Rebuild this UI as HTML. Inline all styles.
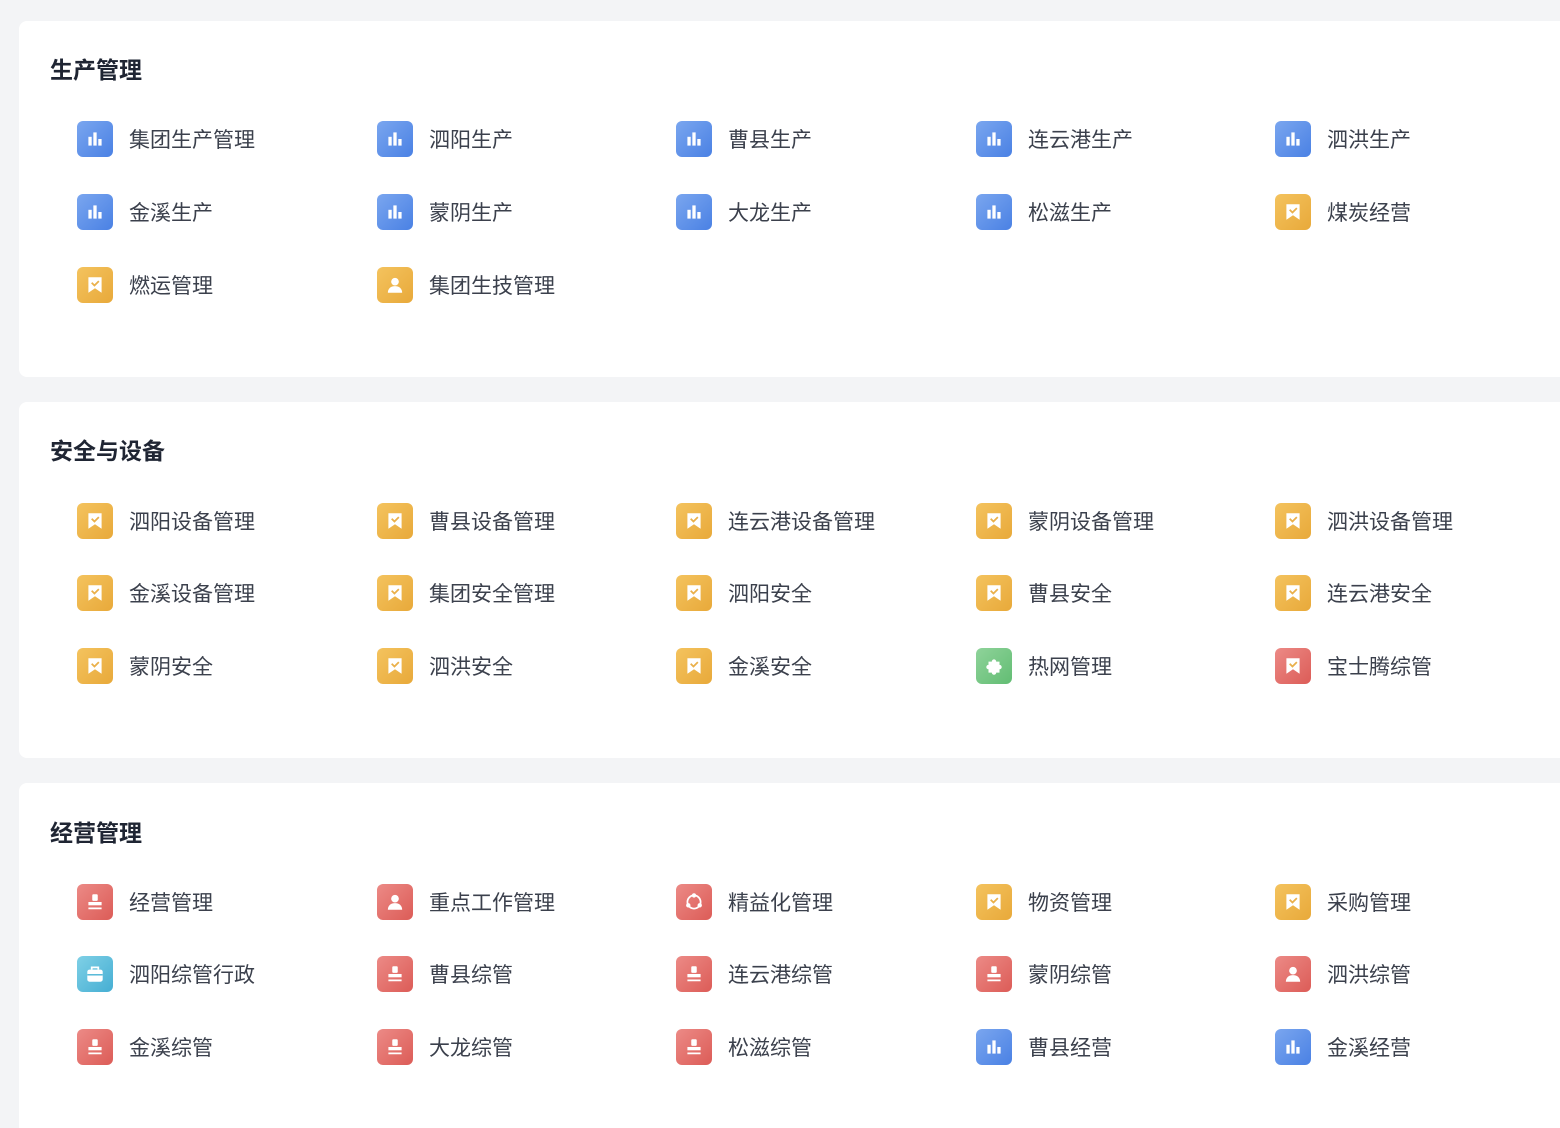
<!DOCTYPE html>
<html style="overflow:hidden;height:1128px"><head><meta charset="utf-8">
<style>
*{margin:0;padding:0;box-sizing:border-box}
body{width:1560px;height:1128px;background:#f3f4f6;position:relative;overflow:hidden;font-family:"Liberation Sans","Noto Sans CJK SC",sans-serif}
.card{position:absolute;left:19px;width:1560px;height:356px;background:#fff;border-radius:8px}
.t{position:absolute;left:31px;font-size:23px;font-weight:bold;color:#1f2533;line-height:30px}
.it{position:absolute;height:36px;display:flex;align-items:center}
.ic{width:36px;height:36px;border-radius:6px;display:flex;align-items:center;justify-content:center}
.ic svg{width:22px;height:22px;display:block}
.lb{margin-left:16px;font-size:21px;color:#3b404c;white-space:nowrap}
.b{background:linear-gradient(135deg,#7aa6ef,#4a81e4)}
.y{background:linear-gradient(135deg,#f4c35e,#e8a93a)}
.r{background:linear-gradient(135deg,#ec8a86,#dc5c57)}
.g{background:linear-gradient(135deg,#8fd39a,#62bd73)}
.c{background:linear-gradient(135deg,#7fd0e6,#45aed3)}
</style></head><body>
<svg width="0" height="0" style="position:absolute">
<defs>
<symbol id="bar" viewBox="0 0 20 20"><rect x="4" y="8" width="3" height="8" fill="#fff"/><rect x="8.5" y="4" width="3" height="12" fill="#fff"/><rect x="13" y="10" width="3" height="6" fill="#fff"/></symbol>
<symbol id="bm" viewBox="0 0 20 20"><path d="M4 3h12v14l-6-4-6 4z" fill="#fff"/><path d="M7 8l2.5 2.5L13.5 6.5" stroke="#eab04a" stroke-width="1.6" fill="none"/></symbol>
<symbol id="ps" viewBox="0 0 20 20"><circle cx="10" cy="7" r="3.5" fill="#fff"/><path d="M3.5 17c0-4 3-6 6.5-6s6.5 2 6.5 6z" fill="#fff"/></symbol>
<symbol id="st" viewBox="0 0 20 20"><rect x="7.5" y="3" width="5" height="6" rx="1" fill="#fff"/><rect x="4" y="10" width="12" height="3" fill="#fff"/><rect x="4" y="15" width="12" height="1.6" fill="#fff"/></symbol>
<symbol id="bag" viewBox="0 0 20 20"><path d="M7 6V4h6v2" stroke="#fff" stroke-width="1.6" fill="none"/><rect x="3" y="6" width="14" height="11" rx="2" fill="#fff"/><rect x="3" y="10" width="14" height="1.4" fill="#5bbbd9"/></symbol>
<symbol id="pz" viewBox="0 0 20 20"><path d="M5 6h3a2 2 0 114 0h3v3a2 2 0 110 4v3h-3a2 2 0 11-4 0H5v-3a2 2 0 110-4z" fill="#fff"/></symbol>
<symbol id="ci" viewBox="0 0 20 20"><circle cx="10" cy="10" r="6" stroke="#fff" stroke-width="1.6" fill="none"/><circle cx="10" cy="4" r="2" fill="#fff"/><circle cx="4.8" cy="13" r="2" fill="#fff"/><circle cx="15.2" cy="13" r="2" fill="#fff"/></symbol>
</defs></svg>

<div class="card" style="top:21px">
<div class="t" style="top:34px">生产管理</div>
</div>
<div class="card" style="top:402px">
<div class="t" style="top:34px">安全与设备</div>
</div>
<div class="card" style="top:783px;height:345px;border-radius:8px 8px 0 0">
<div class="t" style="top:35px">经营管理</div>
</div>

<div class="it" style="left:77px;top:121px"><div class="ic b"><svg viewBox="0 0 20 20"><use href="#bar" width="20" height="20"/></svg></div><span class="lb">集团生产管理</span></div>
<div class="it" style="left:377px;top:121px"><div class="ic b"><svg viewBox="0 0 20 20"><use href="#bar" width="20" height="20"/></svg></div><span class="lb">泗阳生产</span></div>
<div class="it" style="left:676px;top:121px"><div class="ic b"><svg viewBox="0 0 20 20"><use href="#bar" width="20" height="20"/></svg></div><span class="lb">曹县生产</span></div>
<div class="it" style="left:976px;top:121px"><div class="ic b"><svg viewBox="0 0 20 20"><use href="#bar" width="20" height="20"/></svg></div><span class="lb">连云港生产</span></div>
<div class="it" style="left:1275px;top:121px"><div class="ic b"><svg viewBox="0 0 20 20"><use href="#bar" width="20" height="20"/></svg></div><span class="lb">泗洪生产</span></div>
<div class="it" style="left:77px;top:194px"><div class="ic b"><svg viewBox="0 0 20 20"><use href="#bar" width="20" height="20"/></svg></div><span class="lb">金溪生产</span></div>
<div class="it" style="left:377px;top:194px"><div class="ic b"><svg viewBox="0 0 20 20"><use href="#bar" width="20" height="20"/></svg></div><span class="lb">蒙阴生产</span></div>
<div class="it" style="left:676px;top:194px"><div class="ic b"><svg viewBox="0 0 20 20"><use href="#bar" width="20" height="20"/></svg></div><span class="lb">大龙生产</span></div>
<div class="it" style="left:976px;top:194px"><div class="ic b"><svg viewBox="0 0 20 20"><use href="#bar" width="20" height="20"/></svg></div><span class="lb">松滋生产</span></div>
<div class="it" style="left:1275px;top:194px"><div class="ic y"><svg viewBox="0 0 20 20"><use href="#bm" width="20" height="20"/></svg></div><span class="lb">煤炭经营</span></div>
<div class="it" style="left:77px;top:267px"><div class="ic y"><svg viewBox="0 0 20 20"><use href="#bm" width="20" height="20"/></svg></div><span class="lb">燃运管理</span></div>
<div class="it" style="left:377px;top:267px"><div class="ic y"><svg viewBox="0 0 20 20"><use href="#ps" width="20" height="20"/></svg></div><span class="lb">集团生技管理</span></div>

<div class="it" style="left:77px;top:503px"><div class="ic y"><svg viewBox="0 0 20 20"><use href="#bm" width="20" height="20"/></svg></div><span class="lb">泗阳设备管理</span></div>
<div class="it" style="left:377px;top:503px"><div class="ic y"><svg viewBox="0 0 20 20"><use href="#bm" width="20" height="20"/></svg></div><span class="lb">曹县设备管理</span></div>
<div class="it" style="left:676px;top:503px"><div class="ic y"><svg viewBox="0 0 20 20"><use href="#bm" width="20" height="20"/></svg></div><span class="lb">连云港设备管理</span></div>
<div class="it" style="left:976px;top:503px"><div class="ic y"><svg viewBox="0 0 20 20"><use href="#bm" width="20" height="20"/></svg></div><span class="lb">蒙阴设备管理</span></div>
<div class="it" style="left:1275px;top:503px"><div class="ic y"><svg viewBox="0 0 20 20"><use href="#bm" width="20" height="20"/></svg></div><span class="lb">泗洪设备管理</span></div>
<div class="it" style="left:77px;top:575px"><div class="ic y"><svg viewBox="0 0 20 20"><use href="#bm" width="20" height="20"/></svg></div><span class="lb">金溪设备管理</span></div>
<div class="it" style="left:377px;top:575px"><div class="ic y"><svg viewBox="0 0 20 20"><use href="#bm" width="20" height="20"/></svg></div><span class="lb">集团安全管理</span></div>
<div class="it" style="left:676px;top:575px"><div class="ic y"><svg viewBox="0 0 20 20"><use href="#bm" width="20" height="20"/></svg></div><span class="lb">泗阳安全</span></div>
<div class="it" style="left:976px;top:575px"><div class="ic y"><svg viewBox="0 0 20 20"><use href="#bm" width="20" height="20"/></svg></div><span class="lb">曹县安全</span></div>
<div class="it" style="left:1275px;top:575px"><div class="ic y"><svg viewBox="0 0 20 20"><use href="#bm" width="20" height="20"/></svg></div><span class="lb">连云港安全</span></div>
<div class="it" style="left:77px;top:648px"><div class="ic y"><svg viewBox="0 0 20 20"><use href="#bm" width="20" height="20"/></svg></div><span class="lb">蒙阴安全</span></div>
<div class="it" style="left:377px;top:648px"><div class="ic y"><svg viewBox="0 0 20 20"><use href="#bm" width="20" height="20"/></svg></div><span class="lb">泗洪安全</span></div>
<div class="it" style="left:676px;top:648px"><div class="ic y"><svg viewBox="0 0 20 20"><use href="#bm" width="20" height="20"/></svg></div><span class="lb">金溪安全</span></div>
<div class="it" style="left:976px;top:648px"><div class="ic g"><svg viewBox="0 0 20 20"><use href="#pz" width="20" height="20"/></svg></div><span class="lb">热网管理</span></div>
<div class="it" style="left:1275px;top:648px"><div class="ic r"><svg viewBox="0 0 20 20"><use href="#bm" width="20" height="20"/></svg></div><span class="lb">宝士腾综管</span></div>

<div class="it" style="left:77px;top:884px"><div class="ic r"><svg viewBox="0 0 20 20"><use href="#st" width="20" height="20"/></svg></div><span class="lb">经营管理</span></div>
<div class="it" style="left:377px;top:884px"><div class="ic r"><svg viewBox="0 0 20 20"><use href="#ps" width="20" height="20"/></svg></div><span class="lb">重点工作管理</span></div>
<div class="it" style="left:676px;top:884px"><div class="ic r"><svg viewBox="0 0 20 20"><use href="#ci" width="20" height="20"/></svg></div><span class="lb">精益化管理</span></div>
<div class="it" style="left:976px;top:884px"><div class="ic y"><svg viewBox="0 0 20 20"><use href="#bm" width="20" height="20"/></svg></div><span class="lb">物资管理</span></div>
<div class="it" style="left:1275px;top:884px"><div class="ic y"><svg viewBox="0 0 20 20"><use href="#bm" width="20" height="20"/></svg></div><span class="lb">采购管理</span></div>
<div class="it" style="left:77px;top:956px"><div class="ic c"><svg viewBox="0 0 20 20"><use href="#bag" width="20" height="20"/></svg></div><span class="lb">泗阳综管行政</span></div>
<div class="it" style="left:377px;top:956px"><div class="ic r"><svg viewBox="0 0 20 20"><use href="#st" width="20" height="20"/></svg></div><span class="lb">曹县综管</span></div>
<div class="it" style="left:676px;top:956px"><div class="ic r"><svg viewBox="0 0 20 20"><use href="#st" width="20" height="20"/></svg></div><span class="lb">连云港综管</span></div>
<div class="it" style="left:976px;top:956px"><div class="ic r"><svg viewBox="0 0 20 20"><use href="#st" width="20" height="20"/></svg></div><span class="lb">蒙阴综管</span></div>
<div class="it" style="left:1275px;top:956px"><div class="ic r"><svg viewBox="0 0 20 20"><use href="#ps" width="20" height="20"/></svg></div><span class="lb">泗洪综管</span></div>
<div class="it" style="left:77px;top:1029px"><div class="ic r"><svg viewBox="0 0 20 20"><use href="#st" width="20" height="20"/></svg></div><span class="lb">金溪综管</span></div>
<div class="it" style="left:377px;top:1029px"><div class="ic r"><svg viewBox="0 0 20 20"><use href="#st" width="20" height="20"/></svg></div><span class="lb">大龙综管</span></div>
<div class="it" style="left:676px;top:1029px"><div class="ic r"><svg viewBox="0 0 20 20"><use href="#st" width="20" height="20"/></svg></div><span class="lb">松滋综管</span></div>
<div class="it" style="left:976px;top:1029px"><div class="ic b"><svg viewBox="0 0 20 20"><use href="#bar" width="20" height="20"/></svg></div><span class="lb">曹县经营</span></div>
<div class="it" style="left:1275px;top:1029px"><div class="ic b"><svg viewBox="0 0 20 20"><use href="#bar" width="20" height="20"/></svg></div><span class="lb">金溪经营</span></div>
</body></html>
